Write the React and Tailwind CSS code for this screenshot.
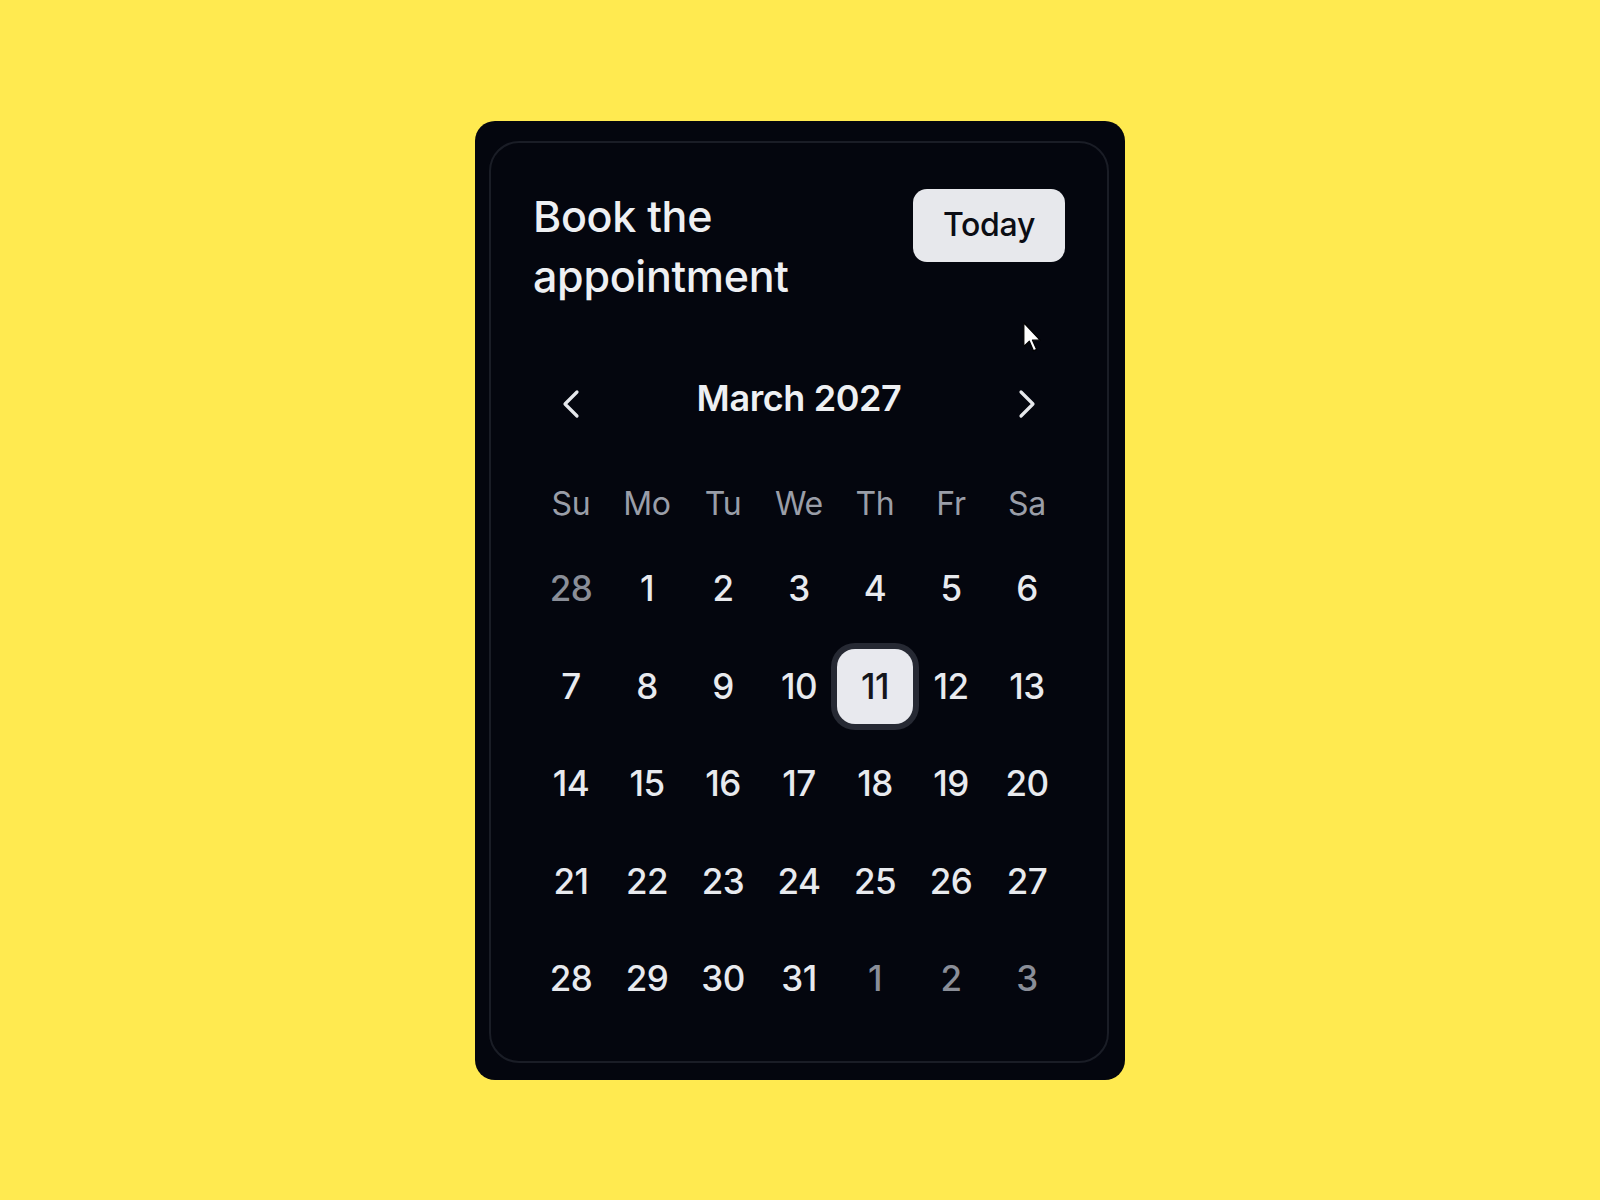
import React from 'react';
import { ChevronLeft, ChevronRight } from 'lucide-react';

const weekDays = ['Su', 'Mo', 'Tu', 'We', 'Th', 'Fr', 'Sa'];

const days = [
  { n: 28, muted: true }, { n: 1 }, { n: 2 }, { n: 3 }, { n: 4 }, { n: 5 }, { n: 6 },
  { n: 7 }, { n: 8 }, { n: 9 }, { n: 10 }, { n: 11, selected: true }, { n: 12 }, { n: 13 },
  { n: 14 }, { n: 15 }, { n: 16 }, { n: 17 }, { n: 18 }, { n: 19 }, { n: 20 },
  { n: 21 }, { n: 22 }, { n: 23 }, { n: 24 }, { n: 25 }, { n: 26 }, { n: 27 },
  { n: 28 }, { n: 29 }, { n: 30 }, { n: 31 }, { n: 1, muted: true }, { n: 2, muted: true }, { n: 3, muted: true },
];

const Cursor = () => (
  <svg width="19" height="30" viewBox="0 0 12 19" className="absolute left-[548px] top-[201px]">
    <path d="M0.5 0.5 L0.5 15.5 L4 12.2 L6.6 18.2 L8.6 17.3 L6 11.5 L10.8 11.5 Z" fill="#ffffff" stroke="#000000" strokeWidth="0.8" strokeLinejoin="round" />
  </svg>
);

const App = () => {
  return (
    <div className="min-h-screen w-full bg-[#ffea50] flex items-center justify-center font-['Inter',sans-serif]">
      {/* Card */}
      <div className="relative w-[650px] bg-[#04060e] rounded-[20px] pl-[14px] pr-[16px] pt-[20px] pb-[17px]">
        <div className="border-2 border-[#1a1d26] rounded-[30px] px-[42px] pt-[43px] pb-[44px]">
          {/* Header */}
          <div className="flex items-start justify-between">
            <h2 className="text-[43px] leading-[60px] font-medium text-[#eef0f3] tracking-[-0.3px] w-[300px]">
              Book the appointment
            </h2>
            <button className="mt-[3px] w-[152px] h-[73px] rounded-[14px] bg-[#e7e8ec] text-[#0b0d14] text-[32px] font-medium tracking-[-0.3px]">
              Today
            </button>
          </div>

          {/* Month nav */}
          <div className="mt-[65px] h-[60px] flex items-center justify-between">
            <button className="w-[76px] flex justify-center text-[#e6e8ec] translate-y-[3px]">
              <ChevronLeft size={48} strokeWidth={1.6} />
            </button>
            <span className="text-[36px] font-semibold text-[#eef0f3] tracking-[-0.4px] -translate-y-[3px]">March 2027</span>
            <button className="w-[76px] flex justify-center text-[#e6e8ec] translate-y-[3px]">
              <ChevronRight size={48} strokeWidth={1.6} />
            </button>
          </div>

          {/* Week days */}
          <div className="mt-[43px] grid grid-cols-7 h-[60px] items-center">
            {weekDays.map((d) => (
              <span key={d} className="text-center text-[32px] text-[#9a9ea8] tracking-[-0.3px]">
                {d}
              </span>
            ))}
          </div>

          {/* Days */}
          <div className="mt-[17px] grid grid-cols-7 gap-y-[21.5px]">
            {days.map((d, i) => (
              <div key={i} className="h-[76px] flex items-center justify-center">
                {d.selected ? (
                  <div className="w-[76px] h-[75px] rounded-[18px] bg-[#e8e9ee] ring-[6px] ring-[#262933] flex items-center justify-center text-[35px] font-medium text-[#14161c] tracking-[-0.5px]">
                    {d.n}
                  </div>
                ) : (
                  <span
                    className={`text-[35px] font-medium tracking-[-0.5px] ${
                      d.muted ? 'text-[#8a8e98]' : 'text-[#e8eaee]'
                    }`}
                  >
                    {d.n}
                  </span>
                )}
              </div>
            ))}
          </div>
        </div>
        <Cursor />
      </div>
    </div>
  );
};

export default App;
